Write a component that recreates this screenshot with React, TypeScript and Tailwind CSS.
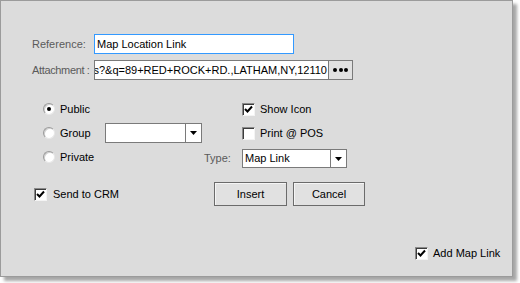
const font = "font-['Liberation_Sans',Arial,sans-serif]";

function Check({ checked }: { checked?: boolean }) {
  return (
    <span className="w-[13px] h-[13px] shrink-0 bg-white border-t border-l border-[#8a8a8a] border-b-[#f4f4f4] border-r-[#f4f4f4] border-b border-r shadow-[inset_1px_1px_0_#3c3c3c] flex items-center justify-center">
      {checked && (
        <svg width="9" height="9" viewBox="0 0 9 9">
          <path d="M1 4 L3.5 6.5 L8 1.5" stroke="#000" strokeWidth="2" fill="none" />
        </svg>
      )}
    </span>
  );
}

function Radio({ checked }: { checked?: boolean }) {
  return (
    <span className="w-[12px] h-[12px] shrink-0 rounded-full bg-white border border-[#9a9a9a] border-b-[#e8e8e8] border-r-[#e8e8e8] shadow-[inset_1px_1px_0_#d0d0d0] flex items-center justify-center">
      {checked && <span className="w-[4px] h-[4px] rounded-full bg-black" />}
    </span>
  );
}

function Arrow() {
  return (
    <svg width="7" height="4" viewBox="0 0 7 4">
      <path d="M0 0 L7 0 L3.5 4 Z" fill="#000" />
    </svg>
  );
}

function Combo({ width, height, value }: { width: string; height: string; value?: string }) {
  return (
    <div className={`flex ${width} ${height} bg-white border border-[#7a7a7a]`}>
      <div className="flex-1 flex items-center pl-[2px] whitespace-nowrap">{value}</div>
      <div className="w-[16px] border-l border-[#7a7a7a] flex items-center justify-center">
        <Arrow />
      </div>
    </div>
  );
}

function Button({ label, width }: { label: string; width: string }) {
  return (
    <div className={`${width} h-[24px] bg-[#e1e1e1] border border-[#6b6b6b] shadow-[inset_1px_1px_0_#f5f5f5] flex items-center justify-center`}>
      {label}
    </div>
  );
}

export default function App() {
  return (
    <div className={`w-[520px] h-[283px] bg-white ${font} text-[11px] text-black leading-none`}>
      <div className="w-[513px] h-[277px] bg-[#dcdcdc] border border-[#9b9b9b] shadow-[4px_4px_3px_rgba(0,0,0,0.35)] flex flex-col pl-[31px] pt-[33px]">
        {/* Reference / attachment */}
        <div className="flex items-center h-[20px]">
          <span className="w-[62px] shrink-0 whitespace-nowrap text-[#5a5a5a]">Reference:</span>
          <div className="w-[200px] h-[20px] bg-white border border-[#3399ff] flex items-center pl-[2px]">
            Map Location Link
          </div>
        </div>
        <div className="flex items-center h-[20px] mt-[6px]">
          <span className="w-[62px] shrink-0 whitespace-nowrap tracking-[-0.35px] text-[#5a5a5a]">Attachment :</span>
          <div className="w-[235px] h-[20px] bg-white border border-[#7a7a7a] flex items-center justify-end overflow-hidden whitespace-nowrap pr-[1px]">
            https://maps.google.com/maps?&amp;q=89+RED+ROCK+RD.,LATHAM,NY,12110
          </div>
          <div className="-ml-px w-[25px] h-[20px] bg-[#e1e1e1] border border-[#7a7a7a] flex items-center justify-center gap-[1.5px]">
            <span className="w-[4px] h-[4px] rounded-full bg-black" />
            <span className="w-[4px] h-[4px] rounded-full bg-black" />
            <span className="w-[4px] h-[4px] rounded-full bg-black" />
          </div>
        </div>

        {/* Visibility / options */}
        <div className="mt-[17px] flex flex-col">
          <div className="flex h-[24px] items-center">
            <div className="w-[172px] flex items-center pl-[11px] gap-[5px]">
              <Radio checked />
              <span>Public</span>
            </div>
            <div className="flex items-center pl-[38px] gap-[5px]">
              <Check checked />
              <span>Show Icon</span>
            </div>
          </div>
          <div className="flex h-[24px] items-center">
            <div className="w-[172px] flex items-center pl-[11px] gap-[5px]">
              <Radio />
              <span className="w-[40px]">Group</span>
              <Combo width="w-[97px]" height="h-[20px]" />
            </div>
            <div className="flex items-center pl-[38px] gap-[5px]">
              <Check />
              <span>Print @ POS</span>
            </div>
          </div>
          <div className="flex h-[24px] items-center">
            <div className="w-[172px] flex items-center pl-[11px] gap-[5px]">
              <Radio />
              <span>Private</span>
            </div>
            <div className="flex items-center mt-[3px]">
              <span className="w-[38px] text-[#5a5a5a]">Type:</span>
              <Combo width="w-[105px]" height="h-[19px]" value="Map Link" />
            </div>
          </div>
        </div>

        {/* CRM + actions */}
        <div className="mt-[13px] flex h-[24px] items-center">
          <div className="w-[182px] flex items-center pl-[2px] gap-[6px]">
            <Check checked />
            <span>Send to CRM</span>
          </div>
          <div className="flex gap-[6px]">
            <Button label="Insert" width="w-[73px]" />
            <Button label="Cancel" width="w-[72px]" />
          </div>
        </div>

        <div className="mt-auto mb-[16px] flex items-center pl-[383px] gap-[5px]">
          <Check checked />
          <span>Add Map Link</span>
        </div>
      </div>
    </div>
  );
}
